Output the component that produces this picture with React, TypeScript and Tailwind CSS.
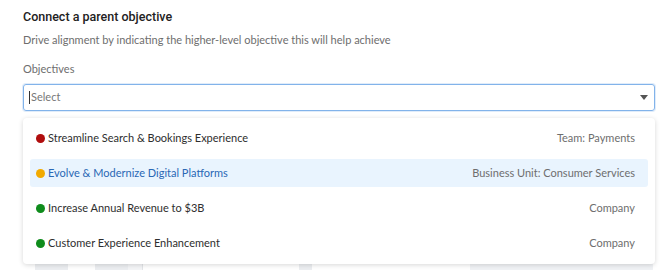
import React from "react";

const items = [
  { name: "Streamline Search & Bookings Experience", scope: "Team: Payments", dot: "bg-[#b00d0d]", active: false },
  { name: "Evolve & Modernize Digital Platforms", scope: "Business Unit: Consumer Services", dot: "bg-[#f2aa00]", active: true },
  { name: "Increase Annual Revenue to $3B", scope: "Company", dot: "bg-[#0f8c1c]", active: false },
  { name: "Customer Experience Enhancement", scope: "Company", dot: "bg-[#0f8c1c]", active: false },
];

export default function App() {
  return (
    <div className="relative w-[670px] h-[270px] overflow-hidden bg-white" style={{ fontFamily: "Lato, 'Noto Sans', sans-serif" }}>
      <div className="pl-[23px] pr-[15px] pt-[9px]">
        <div className="text-[12.5px] font-medium text-[#222] leading-[16px]" style={{ fontFamily: "Roboto, sans-serif" }}>Connect a parent objective</div>
        <div className="mt-[7px] text-[11px] text-[#6e6e6e] leading-[16px]">Drive alignment by indicating the higher-level objective this will help achieve</div>
        <div className="mt-[13px] text-[11px] text-[#6e6e6e] leading-[16px]">Objectives</div>
        <div className="mt-[7px] h-[27px] border border-[#82b3ea] rounded-[3px] shadow-[0_0_0_1px_rgba(130,179,234,0.25)] flex items-center pl-[5px] pr-[6px]">
          <span className="w-px h-[13px] bg-[#333]"></span>
          <span className="text-[11px] text-[#777] ml-[1px]">Select</span>
          <span className="ml-auto w-0 h-0 border-l-[4px] border-r-[4px] border-t-[5px] border-l-transparent border-r-transparent border-t-[#555]"></span>
        </div>
        <div className="mt-[7px] relative">
          <div className="relative z-10 bg-white rounded-[4px] shadow-[0_1px_5px_rgba(0,0,0,0.16)] px-[7px] pt-[6px] pb-[7px] flex flex-col gap-[7px]">
            {items.map((it) => (
              <div key={it.name} className={`h-[28px] flex items-center pl-[6px] pr-[13px] rounded-[3px] ${it.active ? "bg-[#e9f4fe]" : ""}`}>
                <span className={`w-[9px] h-[9px] rounded-full ${it.dot}`}></span>
                <span className={`ml-[3px] text-[11px] ${it.active ? "text-[#2a68b5]" : "text-[#2e2e2e]"}`}>{it.name}</span>
                <span className="ml-auto text-[11px] text-[#6e6e6e]">{it.scope}</span>
              </div>
            ))}
          </div>
          <div className="flex h-[12px] -mt-[6px]">
            <div className="w-[12px]"></div>
            <div className="w-[33px] bg-[#eceef1]"></div>
            <div className="w-[27px]"></div>
            <div className="w-[33px] bg-[#eceef1]"></div>
            <div className="w-[14px] bg-[#f4f5f7]"></div>
            <div className="w-[157px] border-l border-[#e3e5e8]"></div>
            <div className="w-[13px] bg-[#eceef1]"></div>
            <div className="w-[158px]"></div>
            <div className="w-[183px] bg-[#f0f2f5]"></div>
          </div>
        </div>
      </div>
    </div>
  );
}
